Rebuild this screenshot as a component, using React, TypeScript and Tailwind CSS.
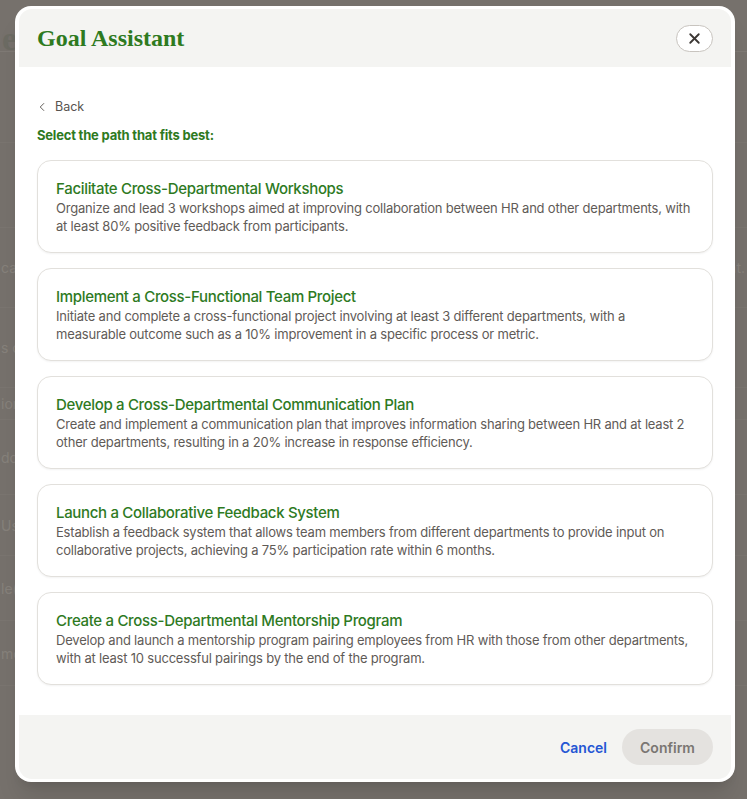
import { ChevronLeft, X } from "lucide-react";

type PathOption = {
  title: string;
  description: string;
};

const options: PathOption[] = [
  {
    title: "Facilitate Cross-Departmental Workshops",
    description:
      "Organize and lead 3 workshops aimed at improving collaboration between HR and other departments, with at least 80% positive feedback from participants.",
  },
  {
    title: "Implement a Cross-Functional Team Project",
    description:
      "Initiate and complete a cross-functional project involving at least 3 different departments, with a measurable outcome such as a 10% improvement in a specific process or metric.",
  },
  {
    title: "Develop a Cross-Departmental Communication Plan",
    description:
      "Create and implement a communication plan that improves information sharing between HR and at least 2 other departments, resulting in a 20% increase in response efficiency.",
  },
  {
    title: "Launch a Collaborative Feedback System",
    description:
      "Establish a feedback system that allows team members from different departments to provide input on collaborative projects, achieving a 75% participation rate within 6 months.",
  },
  {
    title: "Create a Cross-Departmental Mentorship Program",
    description:
      "Develop and launch a mentorship program pairing employees from HR with those from other departments, with at least 10 successful pairings by the end of the program.",
  },
];

// rows of the page sitting behind the dialog (dimmed by the backdrop)
const pageRows = [
  { h: "h-[91px]", left: "", right: "" },
  { h: "h-[85px]", left: "", right: "" },
  { h: "h-[80px]", left: "ca", right: "nt." },
  { h: "h-[80px]", left: "s o", right: "" },
  { h: "h-[32px]", left: "ion", right: "" },
  { h: "h-[75px]", left: "doc", right: "" },
  { h: "h-[61px]", left: "Use", right: "" },
  { h: "h-[65px]", left: "le(", right: "" },
  { h: "h-[65px]", left: "mod", right: "" },
];

const BackgroundPage = () => (
  <div className="min-h-screen bg-[#76716c] [font-family:Inter,sans-serif]">
    <div className="h-[52px] border-b border-[#7f7a75] pl-[2px] pt-[22px] text-[34px] leading-none font-bold text-[#6c6b63] [font-family:'Liberation_Serif',serif]">
      e
    </div>
    {pageRows.map((row, i) => (
      <div
        key={i}
        className={`${row.h} flex items-center justify-between border-b border-[#7a7570] text-[14px] text-[#86817b]`}
      >
        <span className="pl-[1px]">{row.left}</span>
        <span className="pr-[2px]">{row.right}</span>
      </div>
    ))}
  </div>
);

const App = () => {
  return (
    <div className="relative h-screen overflow-hidden">
      <BackgroundPage />

      <div className="absolute inset-0 flex items-start pl-[15px] pt-[6px]">
        <div className="w-[720px] rounded-[16px] bg-white px-1 py-[3px] shadow-xl [font-family:Inter,sans-serif]">
          <div className="overflow-hidden rounded-[13px]">
            {/* header */}
            <div className="flex h-[58px] items-center justify-between bg-[#f4f4f2] pl-[18px] pr-[18px]">
              <h1 className="text-[24px] font-bold text-[#2e7a1f] [font-family:'Liberation_Serif',serif]">
                Goal Assistant
              </h1>
              <button className="flex h-[27px] w-[37px] items-center justify-center rounded-full border border-[#c8c4bf] bg-white text-[#3b3734]">
                <X size={17} strokeWidth={2.6} />
              </button>
            </div>

            {/* body */}
            <div className="bg-white px-[18px] pt-[30px] pb-[30px]">
              <button className="-ml-[2px] flex h-5 items-center gap-[6px] text-[12.5px] text-[#57534f]">
                <ChevronLeft size={14} strokeWidth={1.6} />
                <span>Back</span>
              </button>
              <p className="mt-2 text-[13px] leading-5 font-bold tracking-[-0.2px] text-[#2e7a1f]">
                Select the path that fits best:
              </p>

              <div className="mt-[15px] flex flex-col gap-[15px]">
                {options.map((opt) => (
                  <div
                    key={opt.title}
                    className="rounded-[14px] border border-[#e2e0dc] bg-white px-[18px] pt-[18px] pb-[17px] shadow-[0_1px_2px_rgba(0,0,0,0.05)]"
                  >
                    <h3 className="text-[15px] leading-5 font-medium tracking-[-0.32px] text-[#2e7a1f]">
                      {opt.title}
                    </h3>
                    <p className="text-[13px] leading-[18px] tracking-[-0.2px] text-[#5f5b57]">
                      {opt.description}
                    </p>
                  </div>
                ))}
              </div>
            </div>

            {/* footer */}
            <div className="flex h-[64px] items-center justify-end gap-[15px] bg-[#f4f4f2] pr-[18px]">
              <button className="text-[14px] font-semibold text-[#2456d4]">
                Cancel
              </button>
              <button className="h-[36px] w-[91px] rounded-full bg-[#e4e2df] text-[14px] font-semibold text-[#7a7672]">
                Confirm
              </button>
            </div>
          </div>
        </div>
      </div>
    </div>
  );
};

export default App;
